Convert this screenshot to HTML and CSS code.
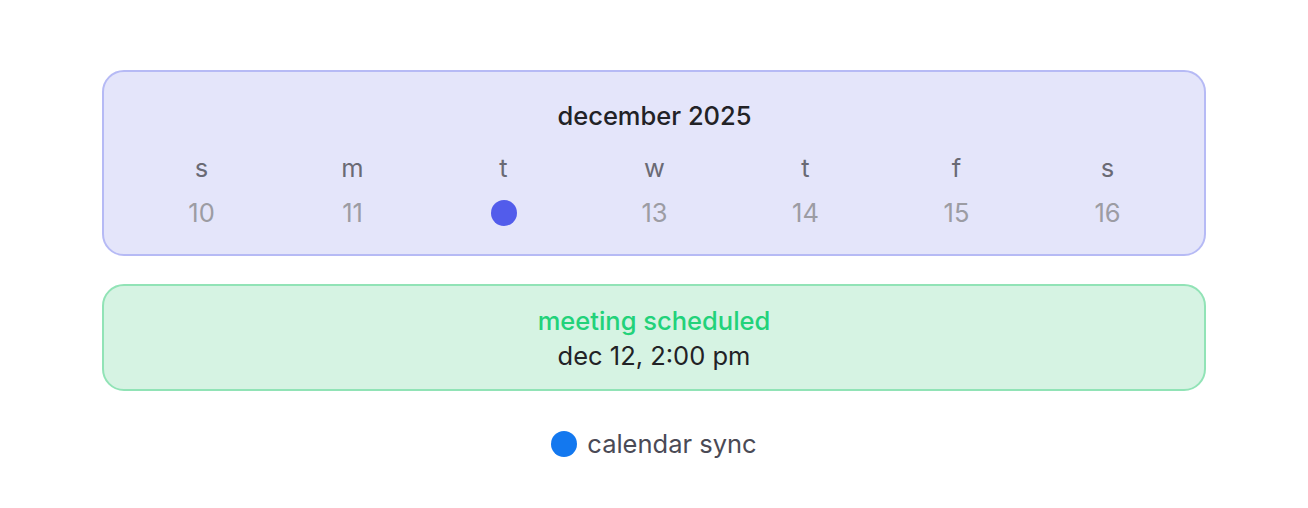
FILE: index.html
```html
<!DOCTYPE html>
<html lang="en">
<head>
<meta charset="utf-8">
<title>calendar</title>
<link rel="stylesheet" href="styles.css">
</head>
<body>
<main class="page">
  <section class="calendar">
    <h1 class="month">december 2025</h1>
    <div class="week">
      <span class="dow">s</span>
      <span class="dow">m</span>
      <span class="dow">t</span>
      <span class="dow">w</span>
      <span class="dow">t</span>
      <span class="dow">f</span>
      <span class="dow">s</span>
      <span class="day">10</span>
      <span class="day">11</span>
      <span class="day"><span class="selected" aria-label="12"></span></span>
      <span class="day">13</span>
      <span class="day">14</span>
      <span class="day">15</span>
      <span class="day">16</span>
    </div>
  </section>
  <section class="event">
    <p class="event-title">meeting scheduled</p>
    <p class="event-time">dec 12, 2:00 pm</p>
  </section>
  <div class="legend">
    <span class="legend-dot"></span>
    <span class="legend-label">calendar sync</span>
  </div>
</main>
</body>
</html>
```

FILE: styles.css
```css
* {
  box-sizing: border-box;
}

html, body {
  margin: 0;
  padding: 0;
  background: #ffffff;
}

body {
  font-family: Inter, "Liberation Sans", sans-serif;
  font-size: 25.5px;
  color: #222226;
}

.page {
  width: 1104px;
  margin: 0 auto;
  padding-top: 70px;
  display: flex;
  flex-direction: column;
}

.calendar {
  background: #e4e5fa;
  border: 2px solid #b6baf5;
  border-radius: 22px;
  padding: 26px 21px 24px 22px;
}

.month {
  margin: 0 0 16px;
  font-size: 25.5px;
  font-weight: 500;
  line-height: 36px;
  text-align: center;
  color: #222226;
}

.week {
  display: grid;
  grid-template-columns: repeat(7, 1fr);
  row-gap: 8px;
}

.dow,
.day {
  height: 36px;
  display: flex;
  align-items: center;
  justify-content: center;
  line-height: 36px;
}

.dow {
  color: #6a6a74;
}

.day {
  color: #9c9ca3;
  padding-top: 2px;
}

.selected {
  width: 26px;
  height: 26px;
  border-radius: 50%;
  background: #525ceb;
}

.event {
  margin-top: 28px;
  background: #d6f3e3;
  border: 2px solid #91e3b6;
  border-radius: 22px;
  padding: 17px 22px 16px;
  text-align: center;
}

.event p {
  margin: 0;
  line-height: 35px;
  font-size: 25.5px;
}

.event-title {
  color: #22d27a;
  font-weight: 500;
}

.event-time {
  color: #222226;
}

.legend {
  margin-top: 35px;
  display: flex;
  align-items: center;
  justify-content: center;
  gap: 10px;
  height: 36px;
}

.legend-dot {
  width: 26px;
  height: 26px;
  border-radius: 50%;
  background: #1378ef;
}

.legend-label {
  color: #4a4a55;
  line-height: 36px;
}
```
